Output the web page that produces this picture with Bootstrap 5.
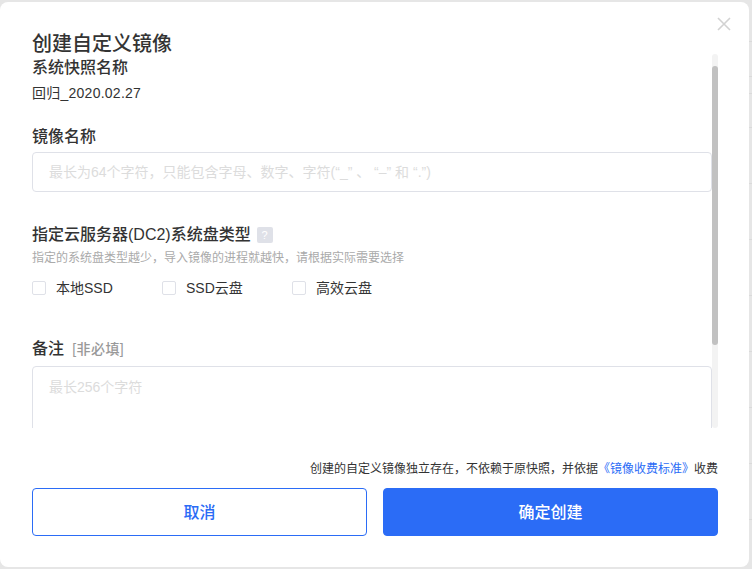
<!DOCTYPE html>
<html lang="zh">
<head>
<meta charset="utf-8">
<title>创建自定义镜像</title>
<link rel="stylesheet" href="https://cdn.jsdelivr.net/npm/bootstrap@5.3.0/dist/css/bootstrap.min.css">
<style>
html,body{height:100%;overflow:hidden}
body{background-color:#e6e6e6;background-image:linear-gradient(#dadada,#dadada),linear-gradient(#dadada,#dadada),linear-gradient(#dadada,#dadada),linear-gradient(#dadada,#dadada),repeating-linear-gradient(#dadada 0 1px,transparent 1px 56px);background-repeat:no-repeat;background-size:100% 1px,100% 1px,100% 1px,100% 1px,100% 100%;background-position:0 41px,0 76px,0 93px,0 127px,0 183px;font-family:"Liberation Sans","Noto Sans CJK SC",sans-serif;color:#333}
.dlg{width:749px;height:565px;margin-top:2px;background:#fff;border-radius:8px;position:relative;display:flex;flex-direction:column}
.dlg-x{position:absolute;top:15px;right:18px;width:14px;height:14px;padding:0;border:0;background:none;line-height:0}
.dlg-title{font-size:20px;font-weight:500;line-height:20px;margin:32px 0 0 32px;color:#333}
.dlg-scroll{height:374px;margin:0 31px 0 32px;overflow:hidden;position:relative;width:686px}
.sb-track{position:absolute;top:0;right:0;width:6px;height:100%;background:#f3f3f3;border-radius:3px}
.sb-thumb{position:absolute;top:12px;left:0;width:6px;height:279px;background:#c1c1c1;border-radius:3px}
.fld-label{font-size:16px;font-weight:500;line-height:22px;color:#333;margin:0}
.snap-label{margin-top:3px}
.snap-val{font-size:14px;line-height:18px;margin-top:5px;color:#333;letter-spacing:.25px}
.name-label{margin-top:24px}
.fake-input{display:block;width:680px;height:40px;border:1px solid #dfe1e8;border-radius:4px;padding:0 16px;font-size:14px;outline:0;font-family:inherit;margin-top:4px;box-shadow:none}
.fake-input::placeholder,.fake-area::placeholder{color:#dcdcdc;opacity:1}
.disk-label{margin-top:32px;display:flex;align-items:center;gap:6px}
.q-mark{width:16px;height:16px;background:#dfe1e8;border-radius:2px;color:#fff;font-size:11px;line-height:16px;text-align:center;font-weight:400}
.hint{font-size:12px;line-height:16px;color:#aaa;margin-top:4px}
.opts{display:flex;margin-top:12px}
.opt{width:130px;display:flex;align-items:center;font-size:14px;line-height:20px;color:#333;margin:0}
.opt input{appearance:none;width:14px;height:14px;border:1px solid #dfe1e8;border-radius:2px;margin:0 10px 0 0;background:#fff;flex:none}
.note-label{margin-top:40px}
.opt-note{font-size:14px;font-weight:500;color:#999;margin-left:4px;letter-spacing:.4px}
.fake-area{display:block;width:680px;height:100px;border:1px solid #dfe1e8;border-radius:4px;padding:11px 16px;font-size:14px;line-height:18px;outline:0;font-family:inherit;margin-top:6px;resize:none}
.dlg-note{font-size:12px;line-height:16px;color:#333;text-align:right;margin:33px 31px 0 32px}
.dlg-note a{color:#2b6cf6;text-decoration:none}
.dlg-acts{display:flex;gap:16px;margin:11px 31px 0 32px}
.act{flex:1 1 0;height:48px;font-size:16px;font-weight:500;border-radius:4px;padding:2px 0 0;font-family:inherit}
.act-line{border:1px solid #2b6cf6;color:#2b6cf6;background:#fff}
.act-fill{border:1px solid #2b6cf6;color:#fff;background:#2b6cf6}
</style>
</head>
<body>
<div class="dlg">
  <button type="button" class="dlg-x" aria-label="关闭">
    <svg width="14" height="14" viewBox="0 0 14 14"><path d="M1 1l12 12M13 1L1 13" stroke="#d2d2d2" stroke-width="1.6" fill="none"/></svg>
  </button>
  <div class="dlg-title">创建自定义镜像</div>
  <div class="dlg-scroll">
    <p class="fld-label snap-label">系统快照名称</p>
    <div class="snap-val">回归_2020.02.27</div>
    <p class="fld-label name-label">镜像名称</p>
    <input class="fake-input" type="text" placeholder="最长为64个字符，只能包含字母、数字、字符(“_” 、 “–” 和 “.”)">
    <p class="fld-label disk-label">指定云服务器(DC2)系统盘类型 <span class="q-mark">?</span></p>
    <div class="hint">指定的系统盘类型越少，导入镜像的进程就越快，请根据实际需要选择</div>
    <div class="opts">
      <label class="opt"><input type="checkbox">本地SSD</label>
      <label class="opt"><input type="checkbox">SSD云盘</label>
      <label class="opt"><input type="checkbox">高效云盘</label>
    </div>
    <p class="fld-label note-label">备注<span class="opt-note"> [非必填]</span></p>
    <textarea class="fake-area" placeholder="最长256个字符"></textarea>
    <div class="sb-track"><div class="sb-thumb"></div></div>
  </div>
  <div class="dlg-note">创建的自定义镜像独立存在，不依赖于原快照，并依据<a href="#">《镜像收费标准》</a>收费</div>
  <div class="dlg-acts">
    <button type="button" class="btn act act-line">取消</button>
    <button type="button" class="btn act act-fill">确定创建</button>
  </div>
</div>
</body>
</html>
